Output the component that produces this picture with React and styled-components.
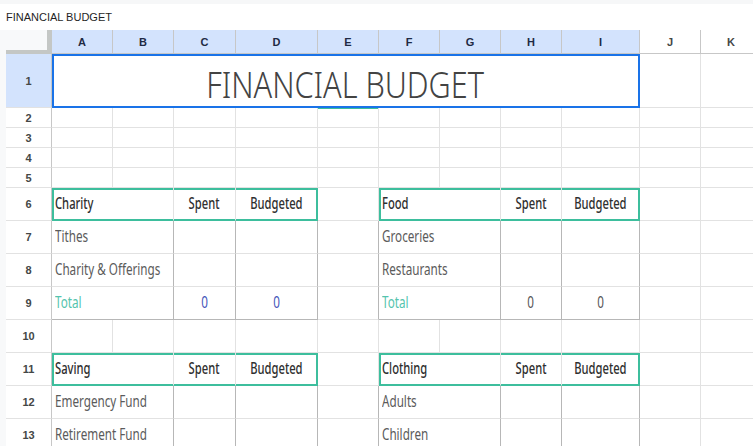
import React from 'react';
import styled, { createGlobalStyle } from 'styled-components';

const CONTENT_FONT = `"Noto Sans", "DejaVu Sans", sans-serif`;
const TEAL = '#3dbe9d';
const BLUE = '#1a73e8';
const GRID = '#e2e2e2';
const DARK = '#b7b7b7';

const COLS = [46, 61, 61, 62, 82, 61, 61, 61, 61, 78, 61, 61];
const LETTERS = ['A', 'B', 'C', 'D', 'E', 'F', 'G', 'H', 'I', 'J', 'K'];

const GlobalStyle = createGlobalStyle`
  html, body { margin: 0; padding: 0; background: #fff; }
  body { width: 753px; height: 446px; overflow: hidden; }
`;

const Page = styled.div`
  width: 753px;
  height: 446px;
  overflow: hidden;
  display: flex;
  flex-direction: column;
`;

const TopBar = styled.div`
  height: 26px;
  border-top: 4px solid #f6f7f8;
  display: flex;
  align-items: center;
  padding-left: 6px;
  font-family: "Liberation Sans", Arial, sans-serif;
  font-size: 11px;
  color: #1f1f1f;
  flex: none;
`;

const SheetArea = styled.div`
  flex: 1;
  display: flex;
  background: #f8f9fa;
  padding-left: 6px;
  overflow: hidden;
`;

const Grid = styled.div`
  flex: none;
  display: grid;
  grid-template-columns: ${COLS.map((c) => `${c}px`).join(' ')};
  grid-template-rows: 24px 54px repeat(4, 20px) repeat(8, 33px);
  background: #fff;
`;

const Corner = styled.div`
  box-sizing: border-box;
  background: #f8f9fa;
  border-right: 5px solid #c4c7c5;
  border-bottom: 4px solid #c4c7c5;
`;

const ColHead = styled.div`
  box-sizing: border-box;
  display: flex;
  align-items: center;
  justify-content: center;
  background: ${(p) => (p.$selected ? '#d3e3fd' : '#ffffff')};
  border-right: 1px solid #c7c7c7;
  border-bottom: 1px solid #c7c7c7;
  font-family: "Liberation Sans", Arial, sans-serif;
  font-weight: bold;
  font-size: 11px;
  color: ${(p) => (p.$selected ? '#1f2a44' : '#444746')};
`;

const RowHead = styled.div`
  box-sizing: border-box;
  display: flex;
  align-items: center;
  justify-content: center;
  background: ${(p) => (p.$selected ? '#d3e3fd' : '#ffffff')};
  border-right: 1px solid #c7c7c7;
  border-bottom: 1px solid ${GRID};
  font-family: "Liberation Sans", Arial, sans-serif;
  font-weight: bold;
  font-size: 11px;
  color: #444746;
`;

const tealShadow = (sides = '') => {
  const parts = [];
  if (sides.includes('t')) parts.push(`inset 0 2px 0 ${TEAL}`);
  if (sides.includes('b')) parts.push(`inset 0 -1px 0 ${TEAL}`);
  if (sides.includes('l')) parts.push(`inset 2px 0 0 ${TEAL}`);
  if (sides.includes('r')) parts.push(`inset -1px 0 0 ${TEAL}`);
  if (sides.includes('e')) parts.push(`inset 0 1px 0 ${TEAL}`);
  return parts.length ? parts.join(', ') : 'none';
};

const Cell = styled.div`
  box-sizing: border-box;
  grid-column: span ${(p) => p.$span || 1};
  display: flex;
  align-items: center;
  justify-content: ${(p) => (p.$align === 'center' ? 'center' : 'flex-start')};
  padding: 0 3px 2px;
  border-right: 1px solid
    ${(p) => (p.$teal && p.$teal.includes('r') ? TEAL : p.$rightDark ? DARK : GRID)};
  border-bottom: 1px solid
    ${(p) => (p.$teal && p.$teal.includes('b') ? TEAL : p.$bottomDark ? DARK : GRID)};
  box-shadow: ${(p) => tealShadow(p.$teal)};
  font-family: ${CONTENT_FONT};
  font-size: 16px;
  color: #5b5b5b;
  white-space: nowrap;
  overflow: hidden;
`;

const HeadCell = styled(Cell)`
  color: #2f2f2f;
  font-weight: 500;
`;

const TotalCell = styled(Cell)`
  color: #55c4ae;
`;

const NumCell = styled(Cell)`
  color: ${(p) => p.$ink || '#555'};
`;

const TitleCell = styled(Cell)`
  align-items: flex-start;
  justify-content: center;
  padding: 11px 3px 0;
  line-height: 1;
  border-right-color: ${BLUE};
  border-bottom-color: ${BLUE};
  box-shadow: inset 2px 2px 0 ${BLUE}, inset -1px -1px 0 ${BLUE};
  font-size: 37.5px;
  font-weight: 300;
  color: #434343;
`;

/* Narrow face emulation: the sheet uses a condensed typeface */
const Label = styled.span`
  flex: none;
  display: inline-block;
  transform: scaleX(${(p) => p.$sx});
  transform-origin: ${(p) => (p.$align === 'center' ? 'center' : 'left')} center;
`;

const KINDS = {
  plain: [Cell, 0.73],
  head: [HeadCell, 0.7],
  body: [Cell, 0.73],
  total: [TotalCell, 0.73],
  num: [NumCell, 0.73],
  title: [TitleCell, 0.816],
};

const blank = (extra = {}) => ({ kind: 'plain', ...extra });

const head = (name) => [
  { kind: 'head', span: 2, text: name, teal: 'tlb' },
  { kind: 'head', text: 'Spent', align: 'center', teal: 'tb' },
  { kind: 'head', text: 'Budgeted', align: 'center', teal: 'tbr' },
];

const body = (name, ink, total) =>
  total
    ? [
        { kind: 'total', span: 2, text: 'Total', rightDark: true, bottomDark: true },
        { kind: 'num', text: '0', align: 'center', rightDark: true, bottomDark: true, ink },
        { kind: 'num', text: '0', align: 'center', rightDark: true, bottomDark: true, ink },
      ]
    : [
        { kind: 'body', span: 2, text: name, rightDark: true },
        { kind: 'body', rightDark: true },
        { kind: 'body', rightDark: true },
      ];

const plainRow = () => LETTERS.map(() => blank());

const ROWS = [
  {
    n: 1,
    selected: true,
    cells: [{ kind: 'title', span: 9, text: 'FINANCIAL BUDGET', align: 'center' }, blank(), blank()],
  },
  {
    n: 2,
    cells: LETTERS.map((l) => (l === 'E' ? blank({ teal: 'e' }) : blank())),
  },
  { n: 3, cells: plainRow() },
  { n: 4, cells: plainRow() },
  { n: 5, cells: plainRow() },
  { n: 6, cells: [...head('Charity'), blank(), ...head('Food'), blank(), blank()] },
  {
    n: 7,
    cells: [...body('Tithes'), blank({ rightDark: true }), ...body('Groceries'), blank(), blank()],
  },
  {
    n: 8,
    cells: [
      ...body('Charity & Offerings'),
      blank({ rightDark: true }),
      ...body('Restaurants'),
      blank(),
      blank(),
    ],
  },
  {
    n: 9,
    cells: [
      ...body('Total', '#3f55b8', true),
      blank({ rightDark: true }),
      ...body('Total', '#555555', true),
      blank(),
      blank(),
    ],
  },
  { n: 10, cells: plainRow() },
  { n: 11, cells: [...head('Saving'), blank(), ...head('Clothing'), blank(), blank()] },
  {
    n: 12,
    cells: [...body('Emergency Fund'), blank({ rightDark: true }), ...body('Adults'), blank(), blank()],
  },
  {
    n: 13,
    cells: [
      ...body('Retirement Fund'),
      blank({ rightDark: true }),
      ...body('Children'),
      blank(),
      blank(),
    ],
  },
];

export default function App() {
  return (
    <Page>
      <GlobalStyle />
      <TopBar>FINANCIAL BUDGET</TopBar>
      <SheetArea>
        <Grid>
          <Corner />
          {LETTERS.map((l, i) => (
            <ColHead key={l} $selected={i < 9}>
              {l}
            </ColHead>
          ))}
          {ROWS.map((row) => (
            <React.Fragment key={row.n}>
              <RowHead $selected={row.selected}>{row.n}</RowHead>
              {row.cells.map((c, i) => {
                const [Comp, sx] = KINDS[c.kind];
                return (
                  <Comp
                    key={i}
                    $span={c.span}
                    $align={c.align}
                    $teal={c.teal}
                    $rightDark={c.rightDark}
                    $bottomDark={c.bottomDark}
                    $ink={c.ink}
                  >
                    {c.text && (
                      <Label $sx={sx} $align={c.align}>
                        {c.text}
                      </Label>
                    )}
                  </Comp>
                );
              })}
            </React.Fragment>
          ))}
        </Grid>
      </SheetArea>
    </Page>
  );
}
